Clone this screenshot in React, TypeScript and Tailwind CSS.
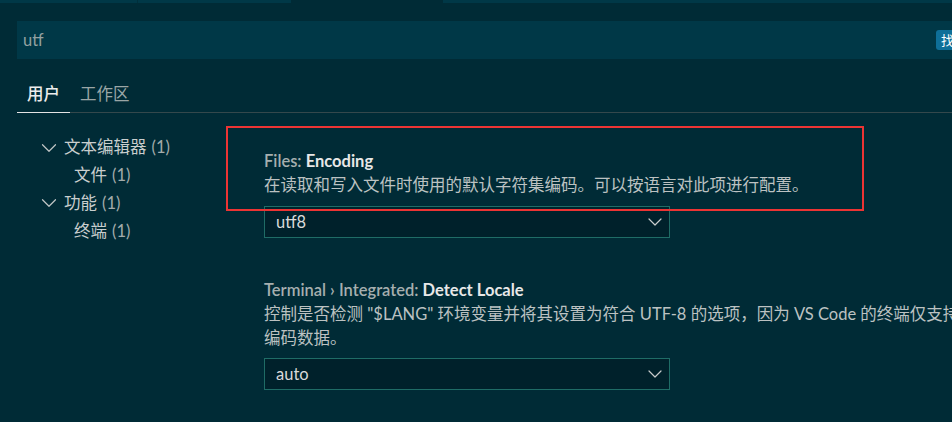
import { ChevronDown } from 'lucide-react';

const tree = [
  { label: '文本编辑器', count: 1, depth: 0 },
  { label: '文件', count: 1, depth: 1 },
  { label: '功能', count: 1, depth: 0 },
  { label: '终端', count: 1, depth: 1 },
];

function Dropdown({ value }: { value: string }) {
  return (
    <div className="flex items-center justify-between w-[406px] h-[32px] pl-[11px] pr-[2px] bg-[#00212b] border border-[#1f6c66] text-[#dadada]">
      <span>{value}</span>
      <ChevronDown size={24} strokeWidth={1.2} className="text-[#c8cccc]" />
    </div>
  );
}

export default function App() {
  return (
    <div className="relative w-[952px] h-[422px] overflow-hidden bg-[#002b36] text-[16.5px] font-['Lato','Noto_Sans_CJK_SC',sans-serif]">
      {/* editor tab strip, cut off at the top */}
      <div className="flex h-[3px]">
        <div className="w-[137px] bg-[#003847]" />
        <div className="w-[1px] bg-[#002f3b]" />
        <div className="w-[153px] bg-[#003847]" />
        <div className="w-[152px] bg-[#002b36]" />
        <div className="flex-1 bg-[#003847]" />
      </div>

      {/* search */}
      <div className="mt-[18px] ml-[17px] flex items-center w-[1010px] h-[38px] bg-[#003847]">
        <div className="w-[919px] pl-[6px] text-[#93a1a1]">utf</div>
        <div className="h-[20px] px-[5px] rounded-[3px] bg-[#0e6f98] text-white text-[13px] leading-[20px] whitespace-nowrap">
          找到 2 个设置
        </div>
      </div>

      {/* user / workspace tabs */}
      <div className="mt-[18px] ml-[17px] flex h-[36px] border-b border-[#34484c]">
        <div className="-mb-px flex items-center px-[10px] border-b border-[#e4e4e4] text-[#ececec] font-medium">
          用户
        </div>
        <div className="flex items-center px-[10px] text-[#9aa6a6]">工作区</div>
      </div>

      <div className="flex">
        {/* table of contents */}
        <div className="w-[264px] shrink-0 pt-[21px]">
          {tree.map((item) => (
            <div
              key={item.label}
              className={`flex items-center h-[27.7px] ${item.depth === 0 ? 'pl-[36px]' : 'pl-[74px]'}`}
            >
              {item.depth === 0 && (
                <ChevronDown size={26} strokeWidth={1.1} className="mr-[2px] text-[#c0c6c6]" />
              )}
              <span className="text-[#c9cece]">{item.label}</span>
              <span className="ml-[5px] text-[#a3abab]">({item.count})</span>
            </div>
          ))}
        </div>

        {/* settings list */}
        <div className="pt-[36px] leading-[24px]">
          <div className="font-semibold">
            <span className="text-[#a6afaf]">Files: </span>
            <span className="text-[#e8e8e8] font-bold">Encoding</span>
          </div>
          <div className="text-[#bcc2c2]">在读取和写入文件时使用的默认字符集编码。可以按语言对此项进行配置。</div>
          <div className="mt-[9px]">
            <Dropdown value="utf8" />
          </div>

          <div className="mt-[40px] font-semibold">
            <span className="text-[#a6afaf]">Terminal › Integrated: </span>
            <span className="text-[#e8e8e8] font-bold">Detect Locale</span>
          </div>
          <div className="text-[#bcc2c2] whitespace-nowrap">
            控制是否检测 "$LANG" 环境变量并将其设置为符合 UTF-8 的选项，因为 VS Code 的终端仅支持 UTF-8
          </div>
          <div className="text-[#bcc2c2]">编码数据。</div>
          <div className="mt-[8px]">
            <Dropdown value="auto" />
          </div>
        </div>
      </div>

      {/* red annotation box */}
      <div className="absolute left-[226px] top-[126px] w-[638px] h-[85px] border-2 border-[#ec3434]" />
    </div>
  );
}
